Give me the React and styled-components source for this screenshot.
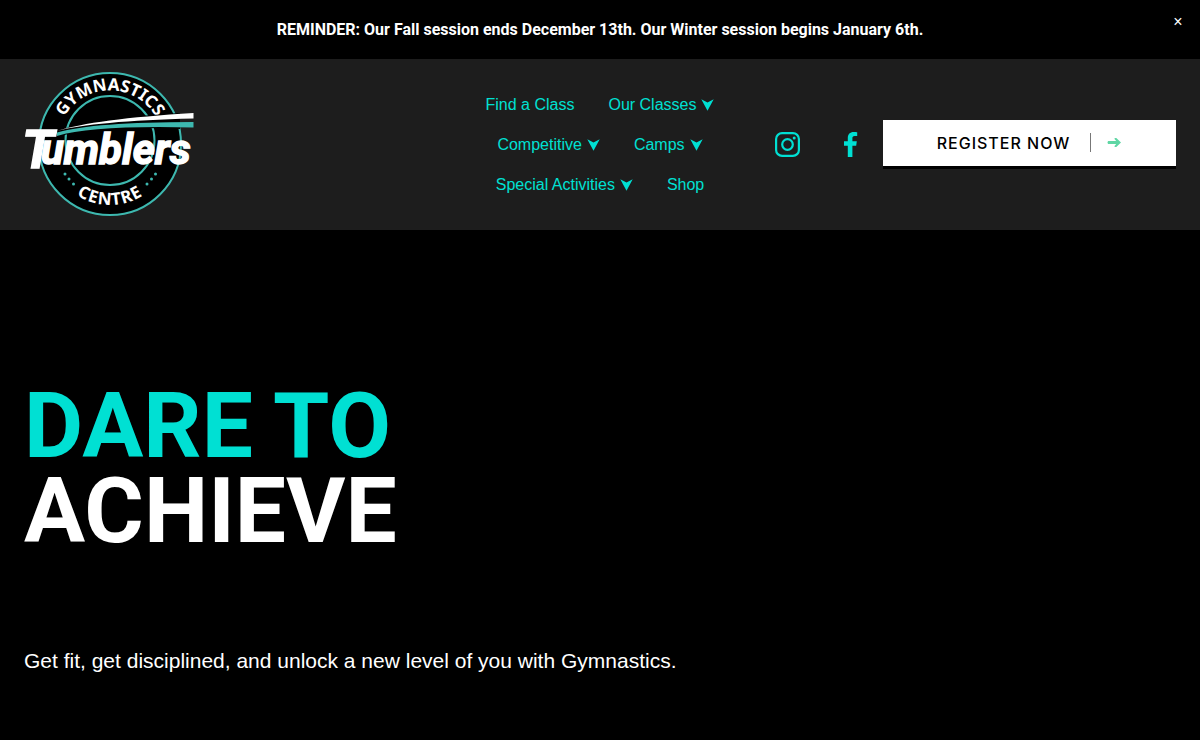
import React, { useState } from "react";
import styled, { createGlobalStyle } from "styled-components";

const teal = "#00e0d3";
const displayFont = `Roboto, "Liberation Sans", Arial, sans-serif`;

const GlobalStyle = createGlobalStyle`
  *, *::before, *::after { box-sizing: border-box; }
  html { background: #000; }
  body {
    margin: 0;
    background: #000;
    color: #fff;
    font-family: "Liberation Sans", Arial, sans-serif;
  }
`;

const Announcement = styled.aside`
  position: relative;
  padding: 18px 48px 17px;
  background: #000;
  text-align: center;
`;

const AnnouncementText = styled.p`
  margin: 0;
  font-family: ${displayFont};
  font-size: 16px;
  line-height: 24px;
  font-weight: 700;
`;

const CloseButton = styled.button`
  position: absolute;
  top: 12px;
  right: 16px;
  padding: 0;
  width: 12px;
  height: 20px;
  border: 0;
  background: none;
  color: #fff;
  font: 16px/20px "Liberation Sans", Arial, sans-serif;
  cursor: pointer;
`;

const Header = styled.header`
  display: grid;
  grid-template-columns: 1fr 252px 1fr;
  align-items: center;
  padding: 12px 24px;
  background: #1d1d1d;
`;

const LogoLink = styled.a`
  display: block;
  justify-self: start;
  svg { display: block; overflow: visible; }
`;

const Nav = styled.nav`
  display: flex;
  flex-wrap: wrap;
  justify-content: center;
  column-gap: 34px;
`;

const NavLink = styled.a`
  display: flex;
  align-items: center;
  gap: 5px;
  color: ${teal};
  font-size: 16px;
  line-height: 40px;
  white-space: nowrap;
  text-decoration: none;
`;

const Actions = styled.div`
  display: flex;
  align-items: center;
  justify-content: flex-end;
  gap: 20px;
`;

const Socials = styled.div`
  display: flex;
  gap: 38px;
`;

const SocialLink = styled.a`
  display: block;
  color: ${teal};
  svg { display: block; }
`;

const RegisterButton = styled.button`
  display: flex;
  align-items: center;
  justify-content: center;
  width: 293px;
  height: 46px;
  margin: 0 0 4px;
  padding: 0;
  border: 0;
  background: #fff;
  box-shadow: 0 3px 0 #000;
  color: #000;
  font: 500 16px/24px Inter, "Liberation Sans", sans-serif;
  letter-spacing: 1px;
  cursor: pointer;
`;

const Divider = styled.span`
  width: 1px;
  height: 19px;
  margin: 0 16px 0 20px;
  background: #777;
`;

const Hero = styled.main`
  padding: 154px 24px 64px;
`;

const Title = styled.h1`
  margin: 0;
  font-family: ${displayFont};
  font-size: 91px;
  line-height: 85px;
  font-weight: 700;
`;

const TitleLine = styled.span`
  display: block;
  color: ${(p) => (p.$accent ? teal : "#fff")};
`;

const Tagline = styled.p`
  margin: 90px 0 0;
  font-size: 21px;
  line-height: 34px;
`;

const Logo = () => (
  <svg width="172" height="147" viewBox="0 0 172 147" role="img" aria-label="Tumblers Gymnastics Centre">
    <defs>
      <path id="arcTop" d="M33 72.500 A53 53 0 0 1 139 72.500" />
      <path id="arcBottom" d="M25 73 A61 61 0 0 0 147 73" />
    </defs>
    <circle cx="86" cy="73" r="71" fill="#000" stroke="#3db8af" strokeWidth="2" />
    <circle cx="86" cy="69.500" r="44.500" fill="#000" stroke="#3db8af" strokeWidth="2" />
    <g fill="#fff" fontFamily="Noto Sans, sans-serif" fontWeight="700" textAnchor="middle">
      <text fontSize="17"><textPath href="#arcTop" startOffset="50%">GYMNASTICS</textPath></text>
      <text fontSize="17" letterSpacing="1"><textPath href="#arcBottom" startOffset="50%">CENTRE</textPath></text>
    </g>
    <g fill="#3db8af">
      <circle cx="41" cy="103" r="1.500" /><circle cx="45" cy="108" r="1.500" /><circle cx="49.500" cy="113" r="1.500" />
      <circle cx="131.500" cy="103" r="1.500" /><circle cx="127.500" cy="108" r="1.500" /><circle cx="123" cy="113" r="1.500" />
    </g>
    <path d="M33 60 Q70 47 156 42 V58 Q70 54 33 66Z" fill="#000" />
    <path d="M33 60 Q70 48 169.500 42 V47.500 Q70 50 33 60Z" fill="#fff" />
    <path d="M33 61.500 Q70 51 169.500 51 V56.500 Q70 54 33 65Z" fill="#3db8af" />
    <g fill="#fff" stroke="#fff" strokeWidth="1.400" fontFamily="Roboto, Liberation Sans, sans-serif" fontWeight="700" fontStyle="italic">
      <text x="-2" y="97" fontSize="53">T<tspan x="17" y="93" fontSize="42">umblers</tspan></text>
    </g>
  </svg>
);

const ChevronIcon = () => (
  <svg width="13" height="12" viewBox="0 0 13 12" aria-hidden="true">
    <path d="M.3 .3 6.500 3.600 12.700 .3 6.500 11.700Z" fill="currentColor" />
  </svg>
);

const InstagramIcon = () => (
  <svg width="25" height="25" viewBox="0 0 25 25" fill="none" stroke="currentColor" aria-hidden="true">
    <rect x="1.100" y="1.100" width="22.800" height="22.800" rx="6" strokeWidth="2.200" />
    <circle cx="12.500" cy="12.500" r="5.300" strokeWidth="2.200" />
    <circle cx="19.200" cy="5.900" r="1.500" fill="currentColor" stroke="none" />
  </svg>
);

const FacebookIcon = () => (
  <svg width="25" height="25" viewBox="0 0 25 25" aria-hidden="true">
    <path d="M9.800 25V13.700H6V9.300h3.800V6C9.800 2.200 12 0 15.600 0c1.700 0 3.200.1 3.600.2v3.900h-2.500c-1.900 0-2.300.9-2.300 2.300v2.900h4.400l-.6 4.400h-3.800V25Z" fill="currentColor" />
  </svg>
);

const ArrowIcon = () => (
  <svg width="15" height="11" viewBox="0 0 15 11" aria-hidden="true">
    <path d="M1.200 4.100H9.200L7.300 1.700Q7.900 .5 9.300 1.100L14 5.500 9.300 9.900Q7.900 10.500 7.300 9.300L9.200 6.900H1.200Q-.2 5.500 1.200 4.100Z" fill="#5fd6a4" />
  </svg>
);

const navItems = [
  { label: "Find a Class" },
  { label: "Our Classes", menu: true },
  { label: "Competitive", menu: true },
  { label: "Camps", menu: true },
  { label: "Special Activities", menu: true },
  { label: "Shop" },
];

export default function App() {
  const [showAnnouncement, setShowAnnouncement] = useState(true);
  return (
    <>
      <GlobalStyle />
      {showAnnouncement && (
        <Announcement>
          <AnnouncementText>
            REMINDER: Our Fall session ends December 13th. Our Winter session begins January 6th.
          </AnnouncementText>
          <CloseButton aria-label="Close announcement" onClick={() => setShowAnnouncement(false)}>×</CloseButton>
        </Announcement>
      )}
      <Header>
        <LogoLink href="#home"><Logo /></LogoLink>
        <Nav>
          {navItems.map((item) => (
            <NavLink key={item.label} href="#">
              {item.label}
              {item.menu && <ChevronIcon />}
            </NavLink>
          ))}
        </Nav>
        <Actions>
          <Socials>
            <SocialLink href="#instagram" aria-label="Instagram"><InstagramIcon /></SocialLink>
            <SocialLink href="#facebook" aria-label="Facebook"><FacebookIcon /></SocialLink>
          </Socials>
          <RegisterButton>
            REGISTER NOW
            <Divider />
            <ArrowIcon />
          </RegisterButton>
        </Actions>
      </Header>
      <Hero>
        <Title>
          <TitleLine $accent>DARE TO</TitleLine>
          <TitleLine>ACHIEVE</TitleLine>
        </Title>
        <Tagline>Get fit, get disciplined, and unlock a new level of you with Gymnastics.</Tagline>
      </Hero>
    </>
  );
}
